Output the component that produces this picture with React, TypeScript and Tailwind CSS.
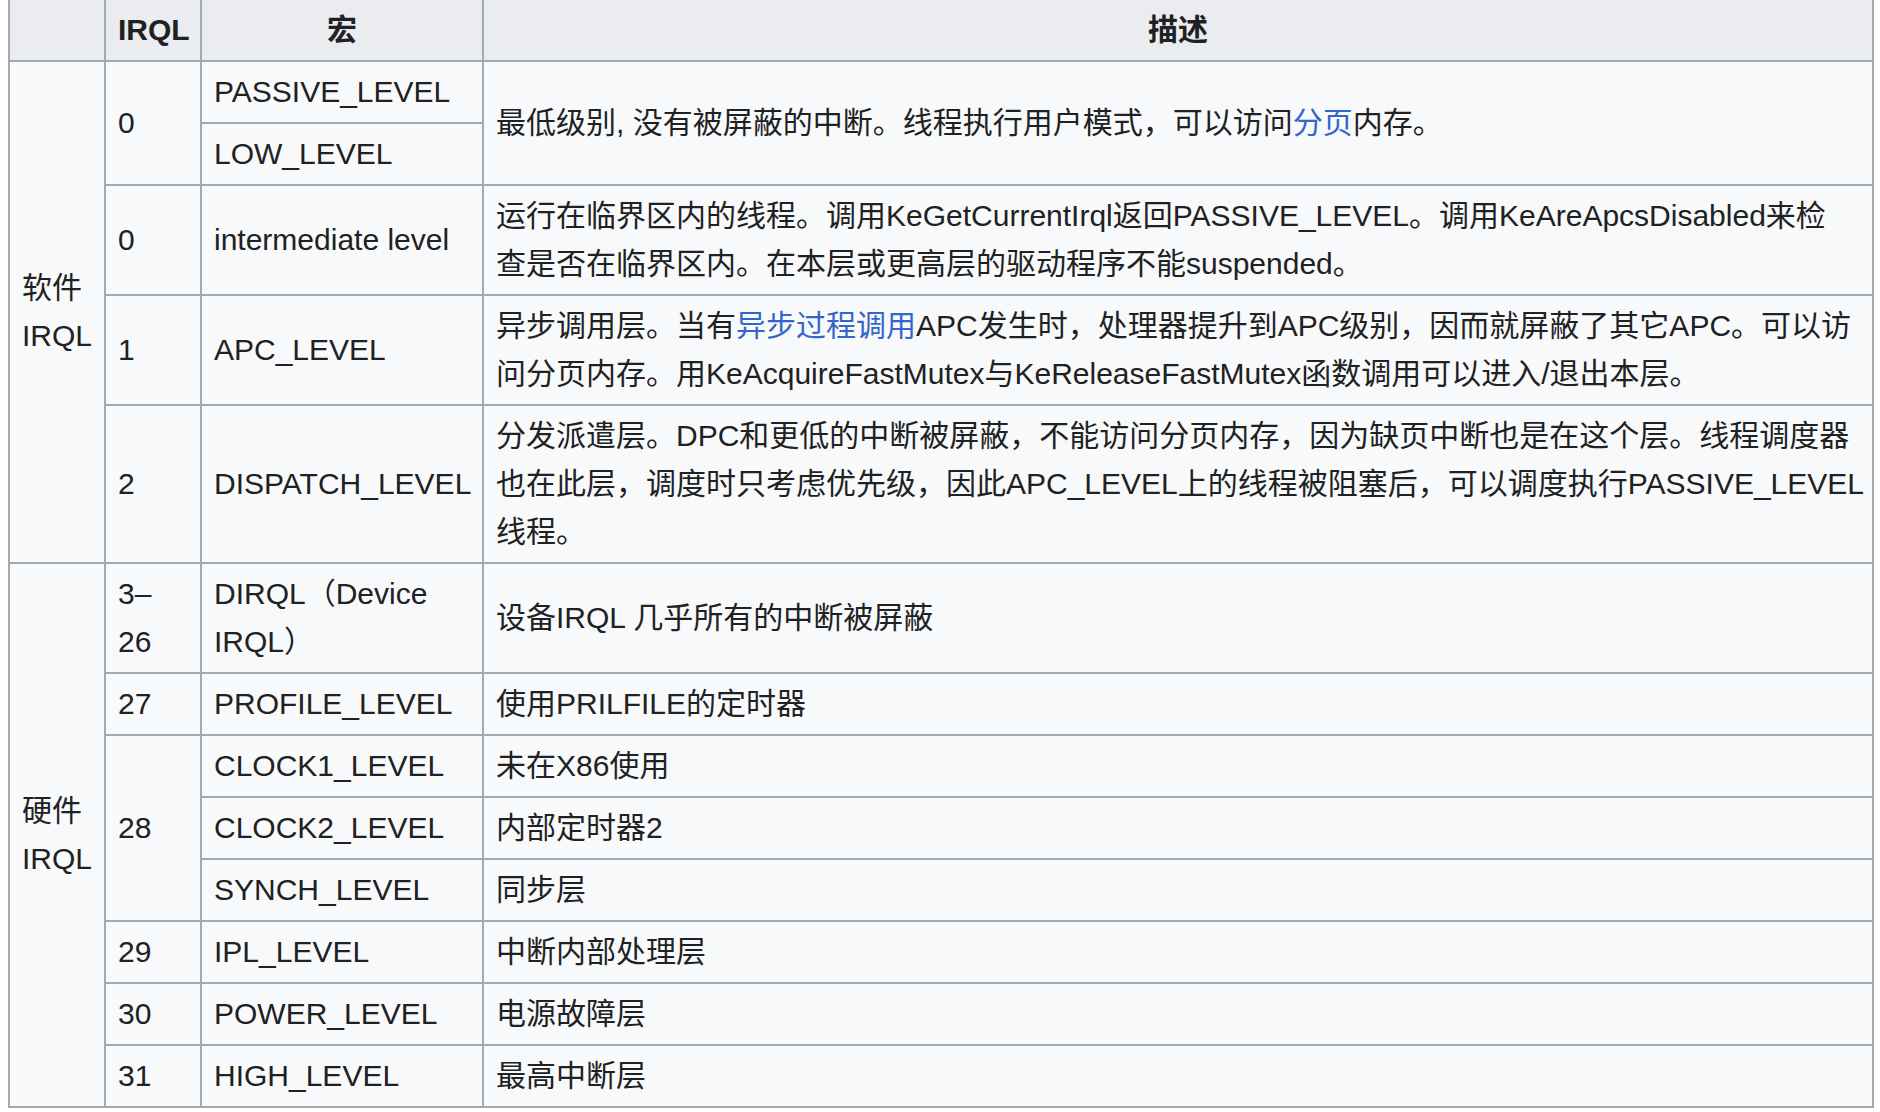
const td = "border-2 border-[#a2a9b1] px-3 py-1.5 align-middle text-left";
const th = "border-2 border-[#a2a9b1] px-3 py-1.5 align-middle text-center font-bold bg-[#eaecf0]";
const desc = `${td} whitespace-nowrap`;
const link = "text-[#3366cc]";

function Row({ irql, macro, text }: { irql?: React.ReactNode; macro: string; text?: React.ReactNode }) {
  return (
    <tr>
      {irql !== undefined && <td className={td}>{irql}</td>}
      <td className={`${td} whitespace-nowrap`}>{macro}</td>
      {text !== undefined && <td className={desc}>{text}</td>}
    </tr>
  );
}

export default function App() {
  return (
    <div className="min-h-screen bg-white pl-2">
      <table
        className="table-fixed border-collapse w-[1866px] -mt-[2px] bg-[#f8f9fa] text-[30px] leading-[48px] text-[#202122]"
        style={{ fontFamily: "'Liberation Sans', 'Noto Sans CJK SC', sans-serif" }}
      >
        <colgroup>
          <col className="w-[96px]" />
          <col className="w-[96px]" />
          <col className="w-[282px]" />
          <col />
        </colgroup>
        <thead>
          <tr>
            <th className={th}></th>
            <th className={th}>IRQL</th>
            <th className={th}>宏</th>
            <th className={th}>描述</th>
          </tr>
        </thead>
        <tbody>
          <tr>
            <td className={td} rowSpan={5}>软件IRQL</td>
            <td className={td} rowSpan={2}>0</td>
            <td className={`${td} whitespace-nowrap`}>PASSIVE_LEVEL</td>
            <td className={desc} rowSpan={2}>
              最低级别, 没有被屏蔽的中断。线程执行用户模式，可以访问<a className={link}>分页</a>内存。
            </td>
          </tr>
          <Row macro="LOW_LEVEL" />
          <Row
            irql="0"
            macro="intermediate level"
            text={
              <>
                运行在临界区内的线程。调用KeGetCurrentIrql返回PASSIVE_LEVEL。调用KeAreApcsDisabled来检
                <br />
                查是否在临界区内。在本层或更高层的驱动程序不能suspended。
              </>
            }
          />
          <Row
            irql="1"
            macro="APC_LEVEL"
            text={
              <>
                异步调用层。当有<a className={link}>异步过程调用</a>APC发生时，处理器提升到APC级别，因而就屏蔽了其它APC。可以访
                <br />
                问分页内存。用KeAcquireFastMutex与KeReleaseFastMutex函数调用可以进入/退出本层。
              </>
            }
          />
          <Row
            irql="2"
            macro="DISPATCH_LEVEL"
            text={
              <>
                分发派遣层。DPC和更低的中断被屏蔽，不能访问分页内存，因为缺页中断也是在这个层。线程调度器
                <br />
                也在此层，调度时只考虑优先级，因此APC_LEVEL上的线程被阻塞后，可以调度执行PASSIVE_LEVEL
                <br />
                线程。
              </>
            }
          />
          <tr>
            <td className={td} rowSpan={8}>硬件IRQL</td>
            <td className={td}>
              3–
              <br />
              26
            </td>
            <td className={td}>DIRQL（Device IRQL）</td>
            <td className={desc}>设备IRQL 几乎所有的中断被屏蔽</td>
          </tr>
          <Row irql="27" macro="PROFILE_LEVEL" text="使用PRILFILE的定时器" />
          <tr>
            <td className={td} rowSpan={3}>28</td>
            <td className={`${td} whitespace-nowrap`}>CLOCK1_LEVEL</td>
            <td className={desc}>未在X86使用</td>
          </tr>
          <Row macro="CLOCK2_LEVEL" text="内部定时器2" />
          <Row macro="SYNCH_LEVEL" text="同步层" />
          <Row irql="29" macro="IPL_LEVEL" text="中断内部处理层" />
          <Row irql="30" macro="POWER_LEVEL" text="电源故障层" />
          <Row irql="31" macro="HIGH_LEVEL" text="最高中断层" />
        </tbody>
      </table>
    </div>
  );
}
